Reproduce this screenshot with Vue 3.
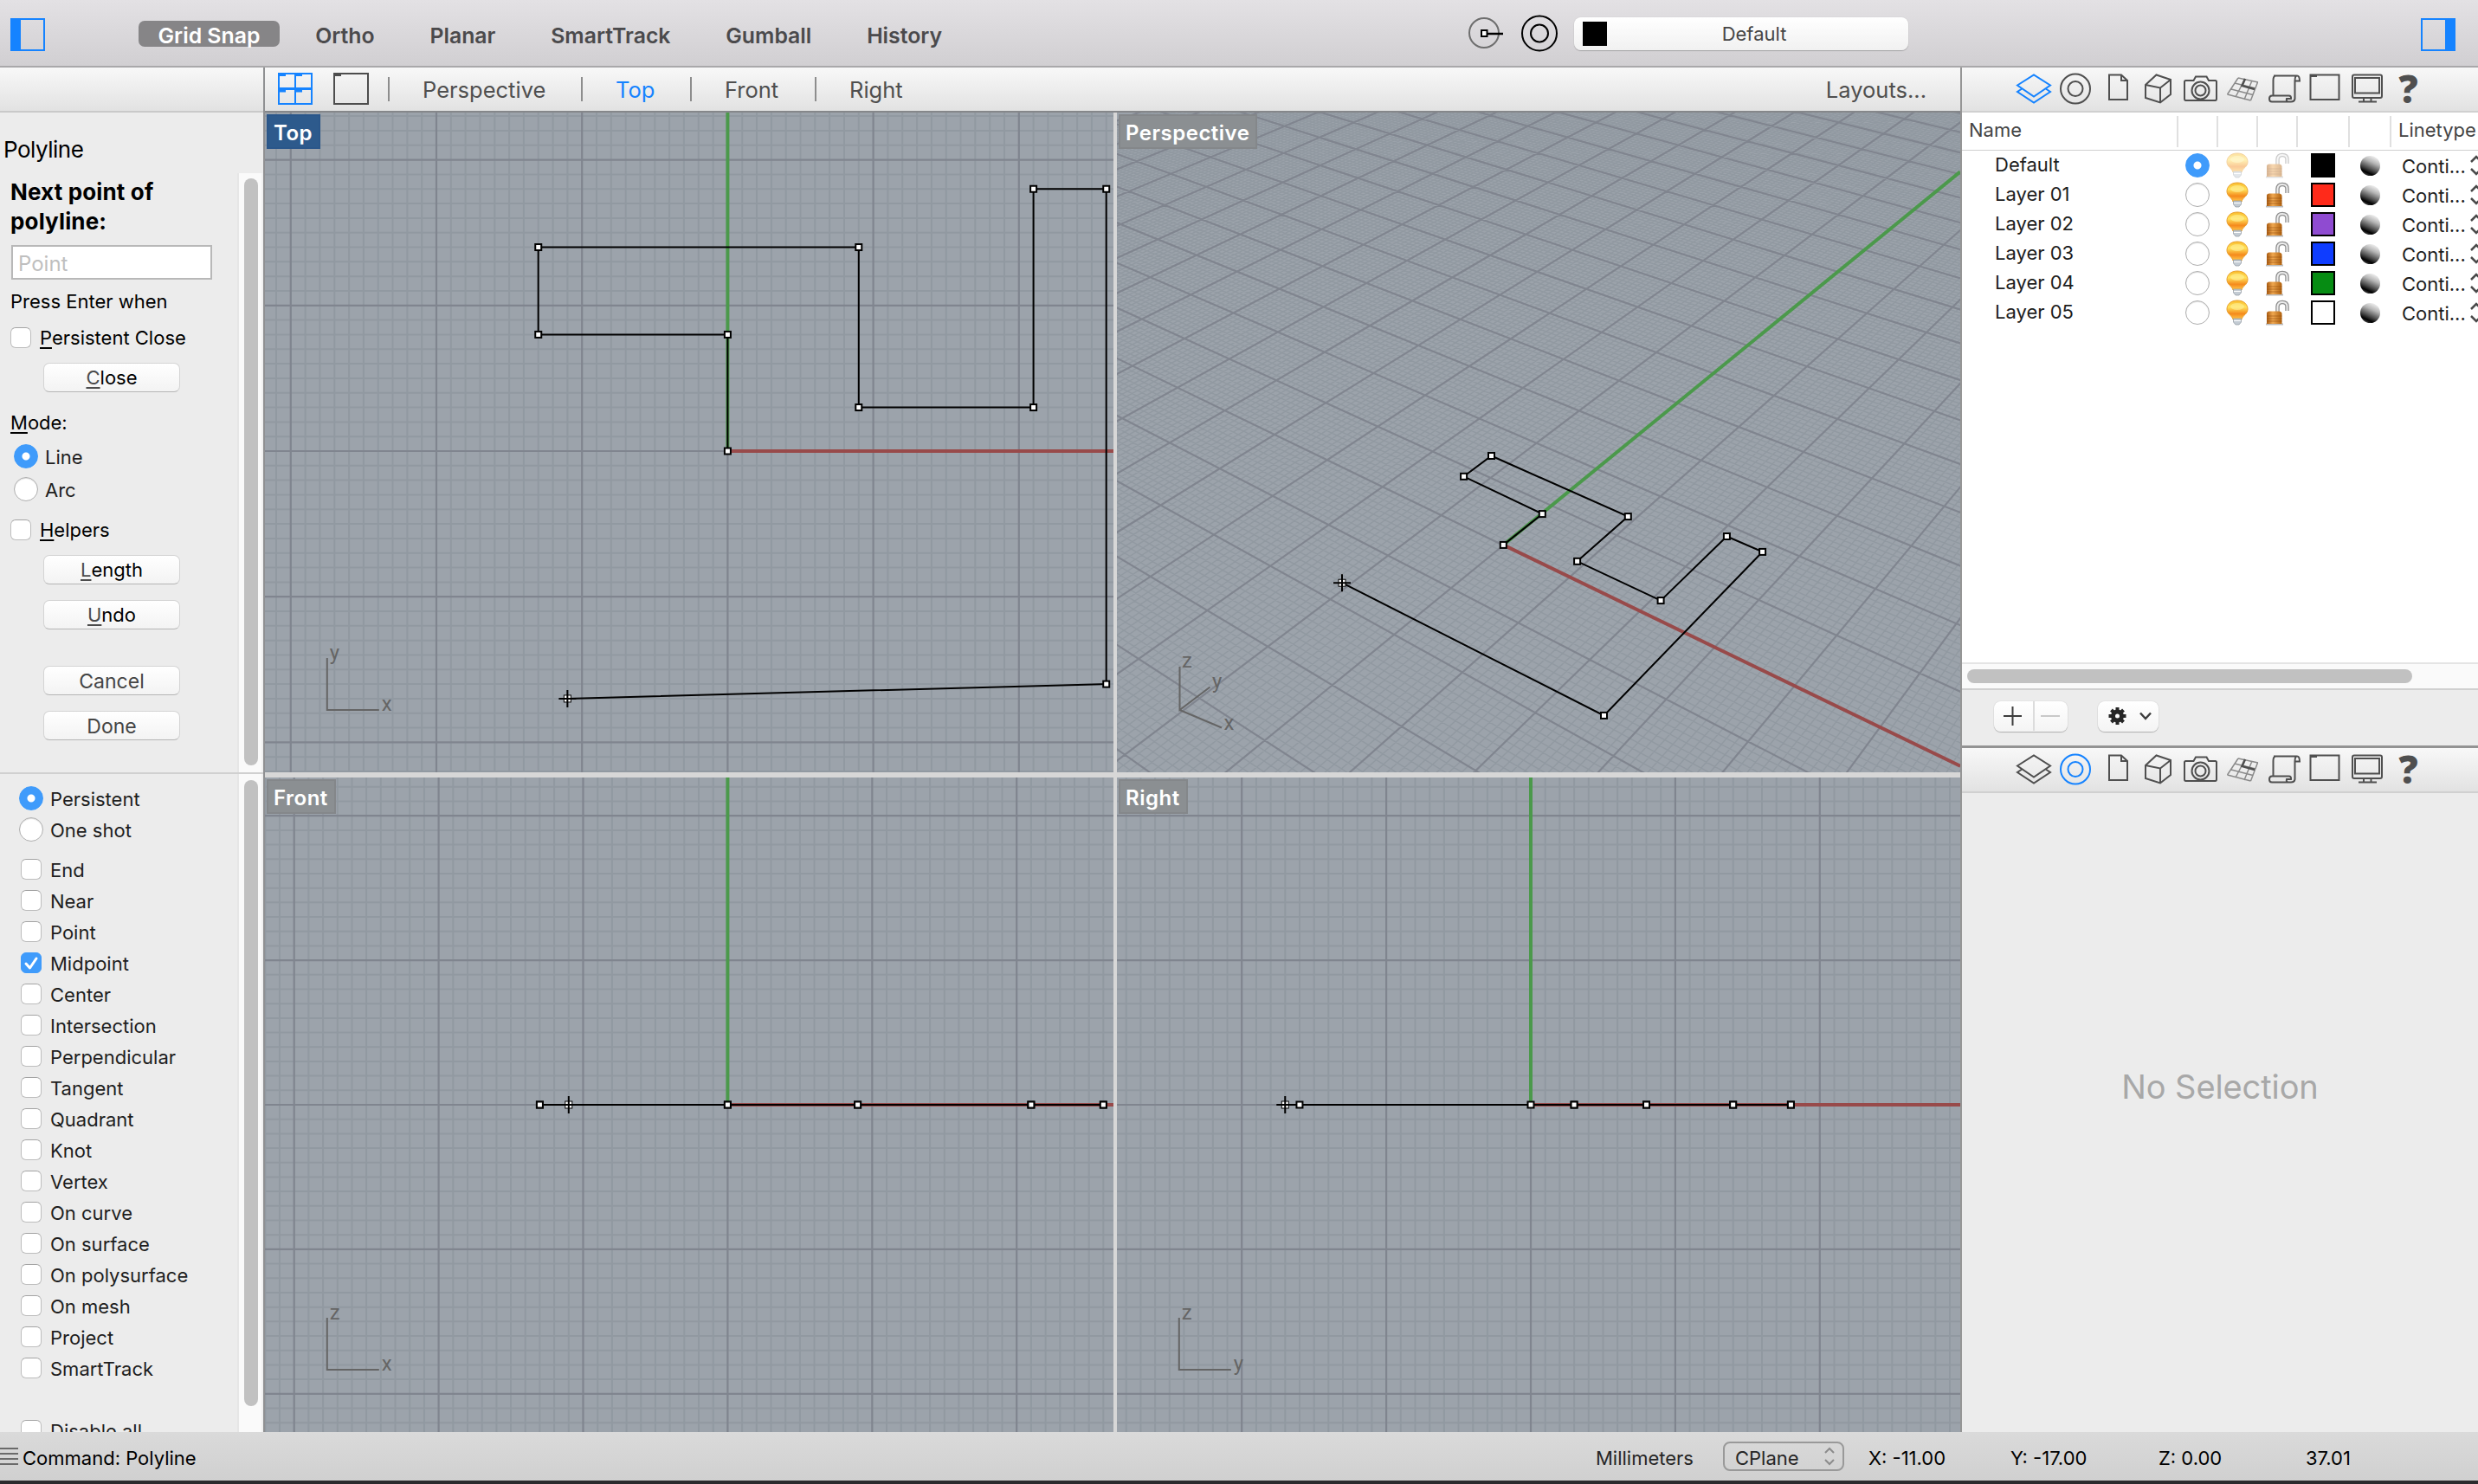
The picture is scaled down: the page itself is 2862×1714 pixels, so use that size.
<script setup>
const modes = ['Grid Snap', 'Ortho', 'Planar', 'SmartTrack', 'Gumball', 'History']
const tabs = [
  { label: 'Perspective', width: 223 },
  { label: 'Top', width: 126, on: true },
  { label: 'Front', width: 144 },
  { label: 'Right', width: 144 },
]
const snaps = [
  'End', 'Near', 'Point', 'Midpoint', 'Center', 'Intersection', 'Perpendicular', 'Tangent', 'Quadrant',
  'Knot', 'Vertex', 'On curve', 'On surface', 'On polysurface', 'On mesh', 'Project', 'SmartTrack',
]
const layers = [
  { name: 'Default', color: '#000000', current: true },
  { name: 'Layer 01', color: '#ff2a1a' },
  { name: 'Layer 02', color: '#8f4bd1' },
  { name: 'Layer 03', color: '#0f3dff' },
  { name: 'Layer 04', color: '#068c13' },
  { name: 'Layer 05', color: '#ffffff' },
]

// Polyline vertices in model units; the last one is the live cursor position.
const vertices = [
  [0, 0], [0, 8], [-13, 8], [-13, 14], [9, 14], [9, 3], [21, 3], [21, 18], [26, 18], [26, -16], [-11, -17],
]

const path = (pts) => 'M' + pts.map((p) => p[0].toFixed(1) + ' ' + p[1].toFixed(1)).join('L')

// Orthographic viewport: grid lines, axes and projected vertices.
function ortho(title, box, origin, step, project, labels, active) {
  const [x, y, w, h] = box
  let minor = ''
  let major = ''
  for (let i = -80; i <= 80; i++) {
    const gx = origin[0] + i * step
    const gy = origin[1] + i * step
    let d = ''
    if (gx > x && gx < x + w) d += `M${gx.toFixed(1)} ${y}v${h}`
    if (gy > y && gy < y + h) d += `M${x} ${gy.toFixed(1)}h${w}`
    if (i % 10) minor += d
    else major += d
  }
  const pts = vertices.map((v) => {
    const p = project(v)
    return [origin[0] + p[0] * step, origin[1] - p[1] * step]
  })
  const ax = x + 71.8
  const ay = y + h - 72
  return {
    title, active, minor, major, pts,
    viewBox: box.join(' '),
    green: `M${origin[0]} ${origin[1]}V${y}`,
    red: `M${origin[0]} ${origin[1]}H${x + w}`,
    triad: `M${ax} ${ay - 60}V${ay}H${ax + 60}`,
    marks: [
      { t: labels[0], x: ax + 63, y: ay + 1 },
      { t: labels[1], x: ax + 3, y: ay - 58 },
    ],
  }
}

// Least-squares plane-to-screen homography from calibration pairs [X, Y, u, v]
// plus the screen directions of the two plane axes.
function homography(pairs, ox, oy, xDir, yDir) {
  const A = Array.from({ length: 8 }, () => new Array(9).fill(0))
  const add = (r) => {
    for (let i = 0; i < 8; i++) for (let j = 0; j < 9; j++) A[i][j] += r[i] * r[j]
  }
  for (const [X, Y, px, py] of pairs) {
    const a = X / 20
    const b = Y / 20
    const u = (px - ox) / 500
    const v = (py - oy) / 500
    add([a, b, 1, 0, 0, 0, -u * a, -u * b, u])
    add([0, 0, 0, a, b, 1, -v * a, -v * b, v])
  }
  add([xDir[1] * 4, 0, 0, -xDir[0] * 4, 0, 0, 0, 0, 0])
  add([0, yDir[1] * 4, 0, 0, -yDir[0] * 4, 0, 0, 0, 0])
  for (let c = 0; c < 8; c++) {
    let p = c
    for (let r = c + 1; r < 8; r++) if (Math.abs(A[r][c]) > Math.abs(A[p][c])) p = r
    ;[A[c], A[p]] = [A[p], A[c]]
    for (let r = 0; r < 8; r++) {
      if (r === c) continue
      const f = A[r][c] / A[c][c]
      for (let k = c; k < 9; k++) A[r][k] -= f * A[c][k]
    }
  }
  const m = A.map((r, i) => r[8] / r[i])
  return (X, Y) => {
    const a = X / 20
    const b = Y / 20
    const w = m[6] * a + m[7] * b + 1
    return [ox + (500 * (m[0] * a + m[1] * b + m[2])) / w, oy + (500 * (m[3] * a + m[4] * b + m[5])) / w, w]
  }
}

function perspective() {
  const px = [
    [0, 0, 1736.3, 629.4], [0, 8, 1781.3, 593.6], [-13, 8, 1690.6, 550.3], [-13, 14, 1722.5, 526.5],
    [9, 14, 1880.3, 596.6], [9, 3, 1821.6, 648.3], [21, 3, 1918.1, 693.6], [21, 18, 1994.4, 619.5],
    [26, 18, 2035.6, 637.4], [26, -16, 1852.5, 826.4], [-11, -17, 1550, 673.2],
  ]
  const H = homography(px, 1736.3, 629.4, [0.9, 0.4356], [0.7745, -0.6325])
  const line = (ax, ay, bx, by) => {
    // Trim the segment to the part in front of the camera.
    let t0 = 0
    let t1 = 1
    const wa = H(ax, ay)[2] - 0.12
    const wb = H(bx, by)[2] - 0.12
    if (wa < 0 && wb < 0) return ''
    if (wa < 0) t0 = wa / (wa - wb)
    if (wb < 0) t1 = wa / (wa - wb)
    const at = (t) => H(ax + (bx - ax) * t, ay + (by - ay) * t)
    return path([at(t0), at(t1)])
  }
  let minor = ''
  let major = ''
  const lo = -150
  const hi = 250
  for (let i = lo; i <= hi; i++) {
    const d = line(i, lo, i, hi) + line(lo, i, hi, i)
    if (i % 10) minor += d
    else major += d
  }
  return {
    title: 'Perspective', minor, major, pts: px.map((p) => [p[2], p[3]]), soft: true,
    viewBox: '1290 130 974 762',
    green: 'M1736.3 629.4L2264 198.4',
    red: 'M1736.3 629.4L2264 884.8',
    triad: 'M1362.5 770V820L1397.5 793.5M1362.5 820L1411 840.5',
    marks: [{ t: 'z', x: 1365, y: 771 }, { t: 'y', x: 1400, y: 795 }, { t: 'x', x: 1413.5, y: 843 }],
  }
}

const viewports = [
  ortho('Top', [306, 130, 980, 762], [840.4, 521], 16.82, (v) => v, ['x', 'y'], true),
  perspective(),
  ortho('Front', [306, 898, 980, 756], [840.4, 1276], 16.69, (v) => [v[0], 0], ['x', 'z']),
  ortho('Right', [1290, 898, 974, 756], [1768, 1276], 16.69, (v) => [v[1], 0], ['y', 'z']),
]

// Inspector strip icons, drawn in a 500 x 50 strip.
const panelIcons = [
  'M10 20.500L29 8.500L48 20.500L29 33.500ZM16 24L10 28L29 40.500L48 28L42 24',
  'M60 24.500a17 17 0 1 0 34 0a17 17 0 1 0 -34 0M68.500 24.500a8.500 8.500 0 1 0 17 0a8.500 8.500 0 1 0 -17 0',
  'M116 8.500H130L137 15V37H116ZM130 8.500V15H137',
  'M158 20L170.500 8.500L187 14V31L175 40.500L158 35ZM158 20L175 23.500L187 14M175 23.500V40.500',
  'M203 16.500Q203 15 204.500 15H213.500L216 10.500H228.500L231 15H238.500Q240 15 240 16.500V36Q240 38 238.500 38H204.500Q203 38 203 36ZM211.500 26.500a10 10 0 1 0 20 0a10 10 0 1 0 -20 0M215.500 26.500a6 6 0 1 0 12 0a6 6 0 1 0 -12 0',
  '',
  'M306 9.500H333Q336 9.500 336 15.500H330.500Q330.500 9.500 333 9.500M308 9.500Q305.500 10 305.500 15V32.500M330.500 15V36Q330 39.500 326 39.500H304Q301 39.500 301 36Q301 32.500 304 32.500H323.500Q326.500 32.500 326 36L321 36Q320 39.500 324 39.500',
  'M348.500 8.500H381.500V37H348.500ZM349 10H356',
  'M399 8.500H429Q431 8.500 431 10.500V33Q431 35 429 35H399Q397 35 397 33V10.500Q397 8.500 399 8.500ZM400 12H428V29.500H400ZM410 35V39M418.500 35V39M404 39.500H425',
]
</script>

<template>
  <div class="app">
    <svg class="defs" width="0" height="0">
      <defs>
        <linearGradient id="glass" x1="0" y1="0" x2="0" y2="1">
          <stop offset="0" stop-color="#f9bb2c" />
          <stop offset=".35" stop-color="#ffe25a" />
          <stop offset=".7" stop-color="#f58a1c" />
          <stop offset="1" stop-color="#ffc84a" />
        </linearGradient>
        <linearGradient id="brass" x1="0" y1="0" x2="1" y2="0">
          <stop offset="0" stop-color="#a85a10" />
          <stop offset=".4" stop-color="#f0a850" />
          <stop offset="1" stop-color="#b0620f" />
        </linearGradient>
      </defs>
    </svg>

    <header class="toolbar">
      <svg class="toggle" width="40" height="40"><path d="M1 2H39V38H1Z" /><path class="solid" d="M0 1H12V39H0Z" /></svg>
      <nav class="modes">
        <span v-for="(m, i) in modes" :key="m" class="mode" :class="{ on: i === 0 }">{{ m }}</span>
      </nav>
      <svg class="tools" width="112" height="48" fill="none">
        <circle cx="20" cy="24" r="17" stroke="#6e6e6e" stroke-width="2" />
        <path d="M23 25H42" stroke="#000" stroke-width="2.500" />
        <rect x="17" y="21" width="6.500" height="7" fill="#fff" stroke="#000" stroke-width="2" />
        <circle cx="84" cy="24.500" r="20" stroke="#000" stroke-width="2" />
        <circle cx="84" cy="24.500" r="10" stroke="#000" stroke-width="2" />
      </svg>
      <div class="current"><i /><span>Default</span></div>
      <svg class="toggle end" width="40" height="40"><path d="M1 2H39V38H1Z" /><path class="solid" d="M28 1H40V39H28Z" /></svg>
    </header>

    <main class="body">
      <aside class="side">
        <div class="strip" />
        <div class="title">Polyline</div>
        <section class="command">
          <div class="fields">
            <div class="prompt">Next point of polyline:</div>
            <div class="input">Point</div>
            <div class="hint">Press Enter when</div>
            <div class="opt"><i class="check" /><span><u>P</u>ersistent Close</span></div>
            <div class="btn b1"><u>C</u>lose</div>
            <div class="mode-label"><u>M</u>ode:</div>
            <div class="opt radio-row r1"><i class="radio on" /><span>Line</span></div>
            <div class="opt radio-row"><i class="radio" /><span>Arc</span></div>
            <div class="opt helpers"><i class="check" /><span><u>H</u>elpers</span></div>
            <div class="btn b2"><u>L</u>ength</div>
            <div class="btn b3"><u>U</u>ndo</div>
            <div class="btn b4 dim">Cancel</div>
            <div class="btn b3 dim">Done</div>
          </div>
          <div class="scroll"><i /></div>
        </section>
        <section class="osnap">
          <div class="fields">
            <div class="snap round"><i class="radio on" /><span>Persistent</span></div>
            <div class="snap round"><i class="radio" /><span>One shot</span></div>
            <div class="list">
              <div v-for="s in snaps" :key="s" class="snap">
                <i class="check" :class="{ on: s === 'Midpoint' }">
                  <svg v-if="s === 'Midpoint'" width="24" height="24" fill="none" stroke="#fff" stroke-width="3"><path d="M6 13L10.500 18L18 7" stroke-linecap="round" stroke-linejoin="round" /></svg>
                </i>
                <span>{{ s }}</span>
              </div>
            </div>
            <div class="snap last"><i class="check" /><span>Disable all</span></div>
          </div>
          <div class="scroll"><i /></div>
        </section>
      </aside>

      <section class="center">
        <div class="tabs">
          <svg class="quad" width="40" height="38" fill="none" stroke="#1583ff" stroke-width="2">
            <path d="M1 1H39V36H1ZM20 1V36" />
            <path d="M1 18.500H39" stroke-width="3" />
            <path d="M2 2.500H9M21 2.500H28M2 21H9M21 21H28" stroke-width="3" />
          </svg>
          <svg class="single" width="41" height="38" fill="none" stroke="#4d4d4d" stroke-width="2">
            <path d="M1 1H40V36H1Z" />
            <path d="M2 2.500H9" stroke-width="3" />
          </svg>
          <div v-for="t in tabs" :key="t.label" class="tab" :class="{ on: t.on }" :style="{ width: t.width + 'px' }">{{ t.label }}</div>
          <div class="layouts">Layouts...</div>
        </div>
        <div class="views">
          <div v-for="v in viewports" :key="v.title" class="view">
            <svg class="canvas" :viewBox="v.viewBox" fill="none">
              <path :d="v.minor" class="minor" :class="{ soft: v.soft }" />
              <path :d="v.major" class="major" />
              <path :d="v.red" stroke="#984a4a" stroke-width="4" />
              <path :d="v.green" stroke="#4b994b" stroke-width="4" />
              <path :d="path(v.pts)" stroke="#000" stroke-width="2" />
              <rect v-for="(p, i) in v.pts.slice(0, -1)" :key="i" :x="p[0] - 3.5" :y="p[1] - 3.5" width="7" height="7" fill="#fff" stroke="#000" stroke-width="2" />
              <g :transform="`translate(${v.pts[10][0]} ${v.pts[10][1]})`">
                <rect x="-4" y="-4" width="8" height="8" fill="#fff" stroke="#000" />
                <path d="M-10 0H10M0 -10V10" stroke="#000" stroke-width="2" />
              </g>
              <path :d="v.triad" stroke="#656565" stroke-width="2" />
              <text v-for="k in v.marks" :key="k.t" :x="k.x" :y="k.y" class="mark">{{ k.t }}</text>
            </svg>
            <div class="badge" :class="{ on: v.active }">{{ v.title }}</div>
          </div>
        </div>
      </section>

      <aside class="inspector">
        <template v-for="panel in [0, 1]" :key="panel">
          <div class="panel-bar">
            <svg width="500" height="50" fill="none" stroke="#4f4f4f" stroke-width="2">
              <path v-for="(d, i) in panelIcons" :key="i" :d="d" :stroke="i === panel ? '#1583ff' : null" />
              <path d="M265 12L252.500 31M273 13L262 34M281 15L272 37M287.500 17L279.500 38M265 12L288 17M261 18L285 24M257 25L282 31.500M252.500 31L279.500 38M265 12" stroke="#8a8a8a" stroke-width="1.500" />
              <path d="M273 13L269.500 21L284 25" stroke-width="2.500" />
              <text x="450.500" y="40.500" class="help">?</text>
            </svg>
          </div>
          <template v-if="panel === 0">
            <div class="thead"><span class="c-name">Name</span><i v-for="w in [46, 46, 46, 60, 48]" :key="w" class="cell" :style="{ width: w + 'px' }" /><span class="c-type">Linetype</span></div>
            <div class="rows">
              <div v-for="l in layers" :key="l.name" class="row">
                <span class="name">{{ l.name }}</span>
                <i class="radio" :class="{ on: l.current }" />
                <svg class="bulb" :class="{ faded: l.current }" width="26" height="30">
                  <path d="M13 1C5 1 1 6 1 11C1 17 7 18 8 23H18C19 18 25 17 25 11C25 6 21 1 13 1Z" fill="url(#glass)" stroke="#e9a02c" />
                  <ellipse cx="13" cy="8" rx="8" ry="4" fill="#fff3a0" opacity=".55" />
                  <path d="M8.500 22H17.500V26L15 29H11L8.500 26Z" fill="#c3cbd3" stroke="#8e979f" stroke-width=".7" />
                  <path d="M9 24.500H17" stroke="#fff" />
                </svg>
                <svg class="lock" :class="{ faded: l.current }" width="28" height="30" fill="none">
                  <path d="M14.500 15V8Q15 3 20 3Q25.500 3 25.500 8V13" stroke="#8f8f8f" stroke-width="4.500" />
                  <path d="M14.500 15V8Q15 3 20 3Q25.500 3 25.500 8V13" stroke="#ececec" stroke-width="2" />
                  <path d="M1 28.500H21" stroke="#bbb" stroke-width="2" />
                  <path d="M2 16Q2 13.500 5 13.500H16Q19 13.500 19.500 16V28H2Z" fill="url(#brass)" />
                  <path d="M2 19H19.500M2 22H19.500M2 25H19.500" stroke="#8f4a0a" stroke-width=".8" opacity=".7" />
                </svg>
                <b class="swatch" :style="{ background: l.color }" />
                <i class="ball" />
                <span class="type">Conti...</span>
                <svg class="updown" width="14" height="28" fill="none" stroke="#4a4a4a" stroke-width="2.500"><path d="M1 9L7 3L13 9M1 17L7 23L13 17" /></svg>
              </div>
            </div>
            <div class="hscroll"><i /></div>
            <div class="actions">
              <div class="pair">
                <svg width="84" height="34" fill="none" stroke="#3c3c3c" stroke-width="2"><path d="M11 17H32M21.500 6V28" /><path d="M46 0V34" stroke="#dcdcdc" /><path d="M54 17H76" stroke="#c9c9c9" /></svg>
              </div>
              <div class="gear">
                <svg width="70" height="34" fill="none" stroke="#262626">
                  <path d="M22.500 7V27M12.500 17H32.500M15.500 10L29.500 24M29.500 10L15.500 24" stroke-width="4" />
                  <circle cx="22.500" cy="17" r="5" stroke-width="5" fill="#fff" />
                  <path d="M49 13.500L55 20L61 13.500" stroke="#3c3c3c" stroke-width="2.500" />
                </svg>
              </div>
            </div>
          </template>
        </template>
        <div class="empty">No Selection</div>
      </aside>
    </main>

    <footer class="status">
      <i class="grip" />
      <span class="cmd">Command: Polyline</span>
      <span class="unit">Millimeters</span>
      <span class="cplane"><span>CPlane</span><svg width="14" height="22" fill="none" stroke="#8c8c8c" stroke-width="2"><path d="M2 7L7 2L12 7M2 15L7 20L12 15" /></svg></span>
      <span class="cx">X: -11.00</span><span class="cy">Y: -17.00</span><span class="cz">Z: 0.00</span><span>37.01</span>
    </footer>
  </div>
</template>

<style>
body { margin: 0; background: #2b2b2d; }
</style>

<style scoped>
* { box-sizing: border-box; }
.app { width: 2862px; height: 1714px; display: flex; flex-direction: column; overflow: hidden; background: #2b2b2d; font-family: Inter, "Liberation Sans", sans-serif; font-size: 22px; color: #1e1e1e; white-space: nowrap; }
.defs { position: absolute; }
i { font-style: normal; display: block; }
svg { display: block; flex: none; }
u { text-decoration-thickness: 2px; text-underline-offset: 3px; }

.toolbar { height: 78px; flex: none; display: flex; align-items: flex-start; background: linear-gradient(#e3e1e4, #d1cfd2); border-bottom: 2px solid #a9a8aa; }
.toggle { margin: 20px 0 0 12px; fill: none; stroke: #1583ff; stroke-width: 2; }
.toggle .solid { fill: #1583ff; stroke: none; }
.toggle.end { margin-left: 592px; }
.modes { display: flex; gap: 18.8px; margin: 24px 0 0 108px; width: 1426px; }
.mode { height: 30px; line-height: 35px; padding: 0 22.5px; font-size: 24.8px; font-weight: 600; color: #4b4a4c; border-radius: 7px; }
.mode.on { background: #868587; color: #fff; }
.tools { margin: 14px 0 0 108px; }
.current { margin: 20px 0 0 12px; width: 386px; height: 38px; border-radius: 8px; background: linear-gradient(#fff, #f1f1f1); box-shadow: 0 1px 1px #a5a4a6, 0 0 1px #bbb; display: flex; align-items: center; padding-left: 10px; color: #464646; }
.current i { width: 28px; height: 28px; background: #000; }
.current span { flex: 1; text-align: center; padding-right: 8px; }

.body { display: flex; height: 1576px; flex: none; }
.side { width: 306px; border-right: 2px solid #8f9092; background: #ececec; display: flex; flex-direction: column; }
.strip { height: 52px; flex: none; background: linear-gradient(#f8f8f8, #e2e2e2); border-bottom: 2px solid #c9c9c9; }
.title { height: 70px; flex: none; line-height: 86px; padding-left: 4px; font-size: 26px; letter-spacing: -.5px; color: #000; }
.command, .osnap { display: flex; justify-content: space-between; overflow: hidden; }
.command { height: 694px; flex: none; border-bottom: 2px solid #d0d0d0; }
.osnap { flex: 1; }
.fields { display: flex; flex-direction: column; width: 272px; color: #000; }
.scroll { width: 30px; background: #fafafa; border-left: 2px solid #e6e6e6; border-right: 2px solid #f0f0f0; }
.scroll i { width: 16px; height: 678px; margin: 6px 0 0 6px; border-radius: 8px; background: #c1c1c1; }
.osnap .scroll i { height: 723px; margin-top: 7px; }
.prompt { width: 230px; height: 70px; padding-right: 30px; margin: 5px 0 0 12px; white-space: normal; font-size: 26px; letter-spacing: .15px; line-height: 34px; font-weight: 700; flex: none; }
.input { margin: 8px 0 0 13px; width: 232px; height: 40px; line-height: 40px; border: 2px solid #b8b8b8; background: #fff; padding-left: 6px; font-size: 24px; color: #bfbfbf; flex: none; }
.hint { margin: 13px 0 0 12px; line-height: 24px; }
.opt { display: flex; align-items: center; height: 24px; margin: 18px 0 0 12px; flex: none; }
.opt span { margin-left: 10px; }
.check { width: 24px; height: 24px; border-radius: 6px; background: #fff; border: 1px solid #bdbdbd; border-top-color: #a3a3a3; flex: none; }
.check.on { background: #3f9bfb; border-color: #3f9bfb; }
.check svg { margin: -1px; }
.radio { width: 28px; height: 28px; border-radius: 50%; background: #fff; border: 1px solid #aeaeae; box-shadow: inset 0 1px 1px #ddd; flex: none; }
.radio.on { background: radial-gradient(#fff 4px, #3f9bfb 5px); border-color: #3f9bfb; box-shadow: none; }
.btn { width: 158px; height: 34px; line-height: 33px; margin-left: 50px; border-radius: 7px; text-align: center; background: linear-gradient(#fff, #f3f3f3); border: 1px solid #d4d4d4; border-bottom-color: #b5b5b5; flex: none; }
.btn u { color: #4c4c4c; }
.dim { color: #454545; font-size: 23px; line-height: 34px; }
.b1 { margin-top: 17px; }
.mode-label { margin: 23px 0 0 12px; line-height: 24px; flex: none; }
.radio-row { margin: 10px 0 0 16px; height: 28px; color: #1e1e1e; }
.radio-row.r1 { margin-top: 13px; }
.radio-row span { margin-left: 8px; padding-top: 1px; }
.helpers { margin-top: 21px; }
.b2 { margin-top: 17px; }
.b3 { margin-top: 18px; }
.b4 { margin-top: 42px; }
.osnap .fields { padding-top: 10px; color: #1e1e1e; overflow: hidden; }
.snap { height: 36px; display: flex; align-items: center; padding-left: 24px; flex: none; }
.snap span { margin-left: 10px; padding-top: 2px; }
.snap.round { padding-left: 22px; }
.snap.round span { margin-left: 8px; }
.list { margin-top: 10px; }
.last { margin-top: 36px; }

.center { width: 1958px; display: flex; flex-direction: column; }
.tabs { height: 52px; display: flex; align-items: center; background: linear-gradient(#f8f8f8, #e2e2e2); border-bottom: 2px solid #85878a; font-size: 25.5px; color: #4f4f4f; }
.quad { margin-left: 15px; }
.single { margin: 0 22px 0 24px; }
.tab { height: 28px; line-height: 29px; padding-left: 38px; border-left: 2px solid #8d8d8d; }
.tab.on { color: #1583ff; }
.layouts { margin-left: auto; padding-right: 39px; }
.views { flex: 1; display: grid; grid-template-columns: 980px 974px; grid-template-rows: 762px 756px; gap: 6px 4px; background: #d7d7d7; }
.view { position: relative; background: #9ca3ab; overflow: hidden; }
.canvas { width: 100%; height: 100%; }
.minor { stroke: #9199a1; stroke-width: 2; }
.minor.soft { stroke-width: 1.4; }
.major { stroke: #80858f; stroke-width: 2.2; }
.mark { font-size: 24px; fill: #656565; font-family: Roboto, sans-serif; }
.badge { position: absolute; left: 2px; top: 2px; height: 40px; line-height: 39px; padding: 0 7px 0 6px; border: 2px solid #84878a; background: #8b8f92; color: #fff; font-size: 24px; font-weight: 600; letter-spacing: .5px; }
.badge.on { background: #2d5a8c; border-color: #2a568a; }

.inspector { width: 598px; border-left: 2px solid #959595; background: #ececec; display: flex; flex-direction: column; overflow: hidden; }
.panel-bar { height: 52px; flex: none; padding-left: 54px; background: linear-gradient(#f8f8f8, #e2e2e2); border-bottom: 2px solid #d0d0d0; }
.panel-bar svg { overflow: visible; }
.help { font-size: 44px; font-weight: 800; fill: #4f4f4f; stroke: none; font-family: "Open Sans", sans-serif; }
.thead { height: 44px; flex: none; display: flex; align-items: center; background: #fff; border-bottom: 1px solid #cfcfcf; color: #454545; }
.c-name { width: 248px; padding: 0 0 4px 8px; }
.cell { height: 36px; border-left: 2px solid #e0e0e0; flex: none; }
.c-type { height: 36px; line-height: 33px; padding-left: 8px; border-left: 2px solid #e0e0e0; }
.rows { height: 591px; flex: none; background: #fff; color: #1e1e1e; }
.row { height: 34px; display: flex; align-items: center; padding-left: 38px; overflow: hidden; }
.row .name { width: 220px; flex: none; padding-bottom: 2px; }
.bulb { margin-left: 19px; }
.lock { margin-left: 19px; }
.faded { opacity: .45; }
.swatch { width: 28px; height: 28px; border: 2px solid #000; margin-left: 25px; flex: none; }
.ball { width: 23px; height: 23px; border-radius: 50%; margin-left: 29px; flex: none; background: linear-gradient(205deg, #fff 5%, #b5b5b5 35%, #4a4a4a 62%, #000 78%, #777 98%); }
.type { width: 79px; margin-left: 25px; padding-top: 2px; flex: none; }
.updown { padding-top: 1px; }
.hscroll { height: 32px; flex: none; background: #fafafa; border-top: 2px solid #e4e4e4; border-bottom: 2px solid #d0d0d0; }
.hscroll i { width: 514px; height: 16px; margin: 6px 0 0 6px; border-radius: 8px; background: #c1c1c1; }
.actions { height: 67px; flex: none; display: flex; padding: 13px 0 0 37px; border-bottom: 3px solid #939393; }
.pair, .gear { height: 35px; border-radius: 8px; background: linear-gradient(#fff, #f4f4f4); box-shadow: 0 1px 1px #b0b0b0, 0 0 1px #aaa; }
.pair { width: 85px; }
.gear { width: 70px; margin-left: 35px; }
.empty { flex: 1; display: flex; align-items: center; justify-content: center; padding-bottom: 60px; font-size: 38px; letter-spacing: -.1px; color: #a8a8a8; }

.status { height: 56px; flex: none; display: flex; align-items: center; background: linear-gradient(#dadada, #d0d0d0); color: #000; }
.status > span:not(.cplane), .cplane span { padding-top: 3px; }
.grip { width: 21px; height: 20px; margin-right: 5px; background: repeating-linear-gradient(#6a6a6a 0 2px, transparent 2px 6px); }
.cmd { width: 1817px; }
.unit { width: 147px; color: #262626; }
.cplane { width: 140px; height: 34px; border: 2px solid #999; border-radius: 8px; display: flex; align-items: center; justify-content: space-between; padding: 0 8px 0 12px; color: #262626; margin-right: 28px; }
.cx { width: 164px; }
.cy { width: 171px; }
.cz { width: 170px; }
</style>
